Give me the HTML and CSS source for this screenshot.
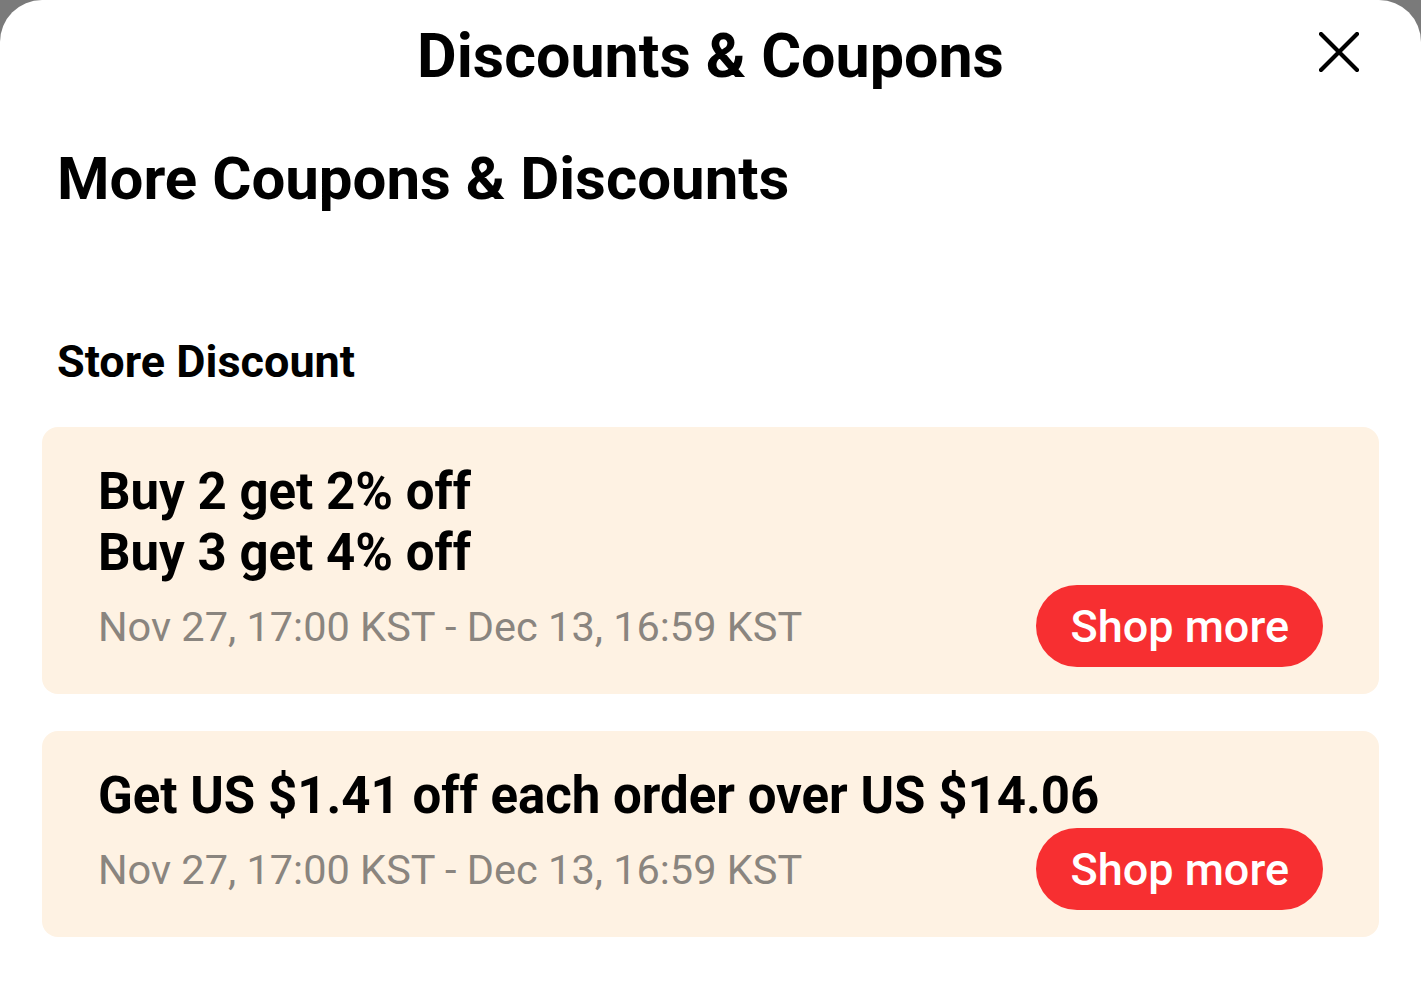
FILE: index.html
```html
<!DOCTYPE html>
<html lang="en">
	<head>
		<meta charset="UTF-8" />
		<meta name="viewport" content="width=device-width, initial-scale=1.0" />
		<title>Discounts &amp; Coupons</title>
		<link rel="stylesheet" href="styles.css">
	</head>
	<body>
		<div class="sheet">
			<header class="sheet-header">
				<h1>Discounts &amp; Coupons</h1>
				<button class="close-btn" aria-label="Close">
					<svg viewBox="0 0 40 40" width="40" height="40">
						<path d="M2 2 L38 38 M38 2 L2 38" stroke="#000" stroke-width="4.2" stroke-linecap="round" fill="none" />
					</svg>
				</button>
			</header>
			<main class="content">
				<h2>More Coupons &amp; Discounts</h2>
				<h3>Store Discount</h3>
				<div class="offer">
					<div class="offer-title">
						Buy 2 get 2% off<br />
						Buy 3 get 4% off
					</div>
					<div class="offer-row">
						<span class="offer-date">Nov 27, 17:00 KST - Dec 13, 16:59 KST</span>
						<button class="shop-btn">Shop more</button>
					</div>
				</div>
				<div class="offer">
					<div class="offer-title">Get US $1.41 off each order over US $14.06</div>
					<div class="offer-row">
						<span class="offer-date">Nov 27, 17:00 KST - Dec 13, 16:59 KST</span>
						<button class="shop-btn">Shop more</button>
					</div>
				</div>
			</main>
		</div>
	</body>
</html>
```

FILE: styles.css
```css
body,
html {
	margin: 0;
	height: 100%;
	background-color: #7a7a7a;
	font-family: Roboto, "Noto Sans", Arial, sans-serif;
	-webkit-font-smoothing: antialiased;
}
.sheet {
	min-height: 100%;
	background-color: #fff;
	border-radius: 42px 42px 0 0;
	box-sizing: border-box;
}
.sheet-header {
	display: flex;
	justify-content: center;
	align-items: center;
	position: relative;
	height: 112px;
}
h1 {
	margin: 0;
	color: #000;
	font-size: 61px;
	font-weight: 700;
	line-height: 1;
}
.close-btn {
	position: absolute;
	right: 62px;
	top: 32px;
	padding: 0;
	border: none;
	background: none;
	width: 40px;
	height: 40px;
	cursor: pointer;
}
.close-btn svg {
	display: block;
}
.content {
	padding: 0 42px 40px 42px;
}
h2 {
	margin: 27px 0 0 15px;
	color: #000;
	font-size: 60px;
	font-weight: 700;
	line-height: 80px;
}
h3 {
	margin: 113px 0 0 15px;
	color: #000;
	font-size: 45px;
	font-weight: 700;
	line-height: 60px;
}
.offer {
	margin-top: 35px;
	padding: 34px 56px 27px 56px;
	background-color: #fef2e3;
	border-radius: 16px;
}
.offer + .offer {
	margin-top: 37px;
}
.offer-title {
	color: #000;
	font-size: 51px;
	font-weight: 700;
	line-height: 61px;
}
.offer-row {
	display: flex;
	justify-content: space-between;
	align-items: center;
	margin-top: 2px;
}
.offer-date {
	color: #8a857f;
	font-size: 41.5px;
	font-weight: 400;
}
.shop-btn {
	height: 82px;
	padding: 0 34px;
	border: none;
	border-radius: 41px;
	background-color: #f72f31;
	color: #fff;
	font-family: Roboto, "Noto Sans", Arial, sans-serif;
	font-size: 45px;
	font-weight: 500;
	cursor: pointer;
}
```
